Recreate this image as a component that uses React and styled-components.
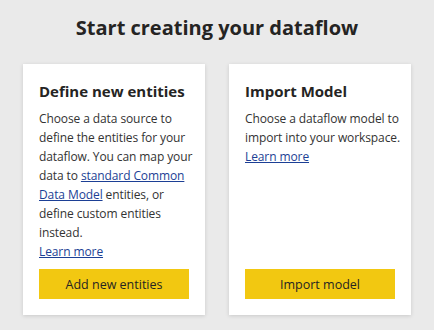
import React from "react";
import styled, { createGlobalStyle } from "styled-components";

const GlobalStyle = createGlobalStyle`
  html, body {
    margin: 0;
    padding: 0;
    background: #eaeaea;
  }
  body {
    font-family: "Open Sans", "Noto Sans", sans-serif;
  }
`;

const Page = styled.div`
  width: 434px;
  height: 330px;
  box-sizing: border-box;
  padding-top: 14px;
  display: flex;
  flex-direction: column;
  align-items: center;
`;

const Heading = styled.h1`
  margin: 0;
  font-size: 20px;
  line-height: 28px;
  font-weight: 700;
  color: #252423;
`;

const CardRow = styled.div`
  display: flex;
  gap: 24px;
  margin-top: 22px;
`;

const Card = styled.div`
  width: 182px;
  height: 251px;
  box-sizing: border-box;
  background: #fff;
  box-shadow: 0 1px 4px rgba(0, 0, 0, 0.14);
  padding: 16px 16px 16px;
  display: flex;
  flex-direction: column;
`;

const CardTitle = styled.h2`
  margin: 0 0 7px;
  font-size: 15px;
  line-height: 22px;
  font-weight: 700;
  color: #252423;
`;

const Body = styled.p`
  margin: 0;
  font-size: 12px;
  line-height: 19px;
  color: #333;
  white-space: nowrap;
  letter-spacing: -0.1px;
`;

const Link = styled.a`
  color: #1c3f95;
  text-decoration: underline;
  cursor: pointer;
`;

const Button = styled.button`
  margin-top: auto;
  width: 150px;
  height: 30px;
  border: none;
  background: #f2c811;
  color: #252423;
  font-family: inherit;
  font-size: 12.5px;
  cursor: pointer;
`;

const App = () => (
  <>
    <GlobalStyle />
    <Page>
      <Heading>Start creating your dataflow</Heading>
      <CardRow>
        <Card>
          <CardTitle>Define new entities</CardTitle>
          <Body>
            Choose a data source to
            <br />
            define the entities for your
            <br />
            dataflow. You can map your
            <br />
            data to <Link>standard Common</Link>
            <br />
            <Link>Data Model</Link> entities, or
            <br />
            define custom entities
            <br />
            instead.
            <br />
            <Link>Learn more</Link>
          </Body>
          <Button>Add new entities</Button>
        </Card>
        <Card>
          <CardTitle>Import Model</CardTitle>
          <Body>
            Choose a dataflow model to
            <br />
            import into your workspace.
            <br />
            <Link>Learn more</Link>
          </Body>
          <Button>Import model</Button>
        </Card>
      </CardRow>
    </Page>
  </>
);

export default App;
